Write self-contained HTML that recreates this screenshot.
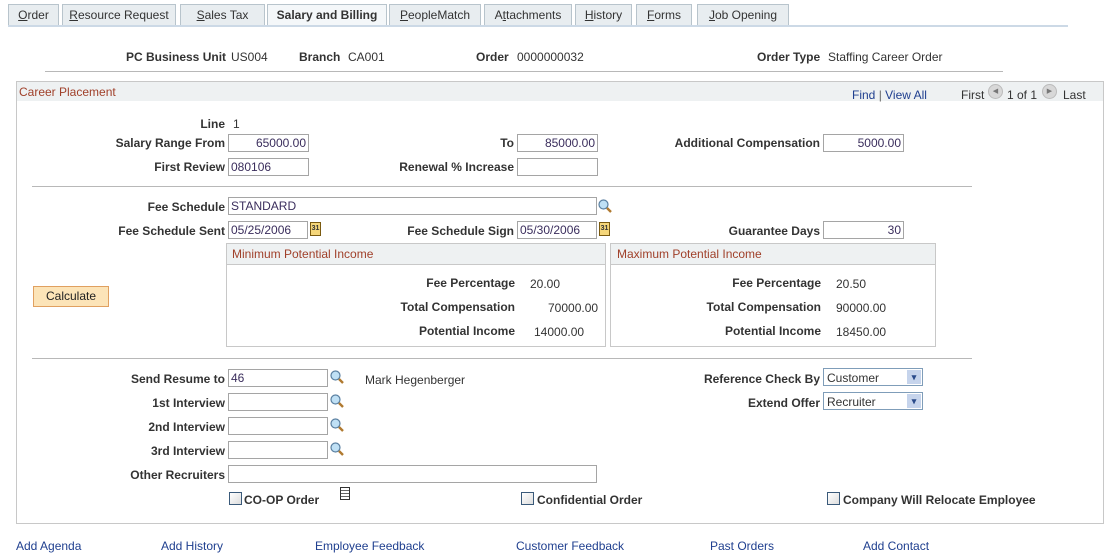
<!DOCTYPE html>
<html><head><meta charset="utf-8"><style>
body{margin:0;width:1104px;height:558px;background:#fff;font-family:"Liberation Sans",Arial,sans-serif;font-size:12px;color:#333;position:relative;overflow:hidden}
.a{position:absolute;white-space:nowrap}
.l{position:absolute;white-space:nowrap;font-weight:bold;color:#333;text-align:right}
.tab{position:absolute;top:4px;height:20px;border:1px solid #b8c4cc;border-bottom:none;background:#e8edf0;line-height:20px;text-align:center;color:#333;font-size:12px}
.tab u{text-decoration:underline}
.in{position:absolute;height:16px;border:1px solid #a5a5a5;background:#fff;line-height:16px;padding:0 2px;color:#3a2d5c;box-sizing:content-box}
.r{text-align:right}
.hl{position:absolute;height:1px;background:#b8b8b8}
.mag{position:absolute;width:14px;height:14px}
.cal{position:absolute;width:9px;height:12px;background:#f5d67a;border:1px solid #7a5a10;font-size:7px;line-height:12px;text-align:center;font-weight:bold;color:#333}
.cb{position:absolute;width:11px;height:11px;border:1px solid #3a5a7a;background:linear-gradient(135deg,#fff,#ddd)}
.lk{position:absolute;color:#1f3f8f;white-space:nowrap}
.sel{position:absolute;height:18px;border:1px solid #7f9db9;background:#fff;line-height:18px;padding-left:3px;box-sizing:border-box}
.sel b{position:absolute;right:1px;top:1px;width:14px;height:14px;background:#c6d4ec;color:#2a4a8a;font-size:9px;line-height:14px;text-align:center}
</style></head><body>
<svg width="0" height="0" style="position:absolute"><defs><g id="m"><circle cx="5.5" cy="5.5" r="4.5" fill="#bfe0f5" stroke="#5a7fa0" stroke-width="1.2"/><line x1="9" y1="9" x2="13" y2="13" stroke="#b07a30" stroke-width="2.4"/></g></defs></svg>

<div class="tab" style="left:8px;width:49px"><u>O</u>rder</div>
<div class="tab" style="left:62px;width:112px"><u>R</u>esource Request</div>
<div class="tab" style="left:180px;width:83px"><u>S</u>ales Tax</div>
<div class="tab" style="left:267px;width:118px;background:#f4f7f9;font-weight:bold;height:21px">Salary and Billing</div>
<div class="tab" style="left:389px;width:90px"><u>P</u>eopleMatch</div>
<div class="tab" style="left:484px;width:86px">A<u>t</u>tachments</div>
<div class="tab" style="left:575px;width:55px"><u>H</u>istory</div>
<div class="tab" style="left:636px;width:54px"><u>F</u>orms</div>
<div class="tab" style="left:697px;width:90px"><u>J</u>ob Opening</div>
<div class="hl" style="left:8px;top:25px;width:1060px;background:#ccd9e6;height:2px"></div>

<div class="l" style="left:126px;top:50px">PC Business Unit</div><div class="a" style="left:231px;top:50px">US004</div>
<div class="l" style="left:299px;top:50px">Branch</div><div class="a" style="left:348px;top:50px">CA001</div>
<div class="l" style="left:476px;top:50px">Order</div><div class="a" style="left:517px;top:50px">0000000032</div>
<div class="l" style="left:757px;top:50px">Order Type</div><div class="a" style="left:828px;top:50px">Staffing Career Order</div>
<div class="hl" style="left:45px;top:71px;width:958px"></div>

<div class="a" style="left:16px;top:81px;width:1086px;height:441px;border:1px solid #c8c8c8"></div>
<div class="a" style="left:17px;top:82px;width:1086px;height:19px;background:#eef1f2"></div>
<div class="a" style="left:19px;top:85px;color:#a0402a">Career Placement</div>
<div class="a" style="left:852px;top:88px;color:#1f3f8f">Find <span style="color:#666">|</span> View All</div>
<div class="a" style="left:961px;top:88px;color:#333">First</div>
<div class="a" style="left:988px;top:84px;width:13px;height:13px;border-radius:50%;background:#d8d8d8;border:1px solid #bbb;font-size:7px;line-height:13px;text-align:center;color:#777">◀</div>
<div class="a" style="left:1007px;top:88px">1 of 1</div>
<div class="a" style="left:1042px;top:84px;width:13px;height:13px;border-radius:50%;background:#d8d8d8;border:1px solid #bbb;font-size:7px;line-height:13px;text-align:center;color:#777">▶</div>
<div class="a" style="left:1063px;top:88px">Last</div>

<div class="l" style="right:879px;top:117px">Line</div><div class="a" style="left:233px;top:117px">1</div>
<div class="l" style="right:879px;top:136px">Salary Range From</div><div class="in r" style="left:228px;top:134px;width:75px">65000.00</div>
<div class="l" style="right:590px;top:136px">To</div><div class="in r" style="left:517px;top:134px;width:75px">85000.00</div>
<div class="l" style="right:284px;top:136px">Additional Compensation</div><div class="in r" style="left:823px;top:134px;width:75px">5000.00</div>
<div class="l" style="right:879px;top:160px">First Review</div><div class="in" style="left:228px;top:158px;width:75px">080106</div>
<div class="l" style="right:590px;top:160px">Renewal % Increase</div><div class="in" style="left:517px;top:158px;width:75px"></div>
<div class="hl" style="left:32px;top:186px;width:940px"></div>

<div class="l" style="right:879px;top:200px">Fee Schedule</div><div class="in" style="left:228px;top:197px;width:363px">STANDARD</div>
<svg class="mag" style="left:598px;top:199px"><use href="#m"/></svg>
<div class="l" style="right:879px;top:224px">Fee Schedule Sent</div><div class="in" style="left:228px;top:221px;width:74px">05/25/2006</div>
<div class="cal" style="left:310px;top:222px">31</div>
<div class="l" style="right:590px;top:224px">Fee Schedule Sign</div><div class="in" style="left:517px;top:221px;width:74px">05/30/2006</div>
<div class="cal" style="left:599px;top:222px">31</div>
<div class="l" style="right:284px;top:224px">Guarantee Days</div><div class="in r" style="left:823px;top:221px;width:75px">30</div>

<div class="a" style="left:226px;top:243px;width:378px;height:102px;border:1px solid #c8c8c8"></div>
<div class="a" style="left:227px;top:244px;width:378px;height:20px;background:#eef1f2;border-bottom:1px solid #c8c8c8"></div>
<div class="a" style="left:232px;top:247px;color:#a0402a">Minimum Potential Income</div>
<div class="l" style="right:589px;top:276px">Fee Percentage</div><div class="a" style="left:530px;top:277px">20.00</div>
<div class="l" style="right:589px;top:300px">Total Compensation</div><div class="a" style="left:548px;top:301px">70000.00</div>
<div class="l" style="right:589px;top:324px">Potential Income</div><div class="a" style="left:534px;top:325px">14000.00</div>

<div class="a" style="left:610px;top:243px;width:324px;height:102px;border:1px solid #c8c8c8"></div>
<div class="a" style="left:611px;top:244px;width:324px;height:20px;background:#eef1f2;border-bottom:1px solid #c8c8c8"></div>
<div class="a" style="left:617px;top:247px;color:#a0402a">Maximum Potential Income</div>
<div class="l" style="right:283px;top:276px">Fee Percentage</div><div class="a" style="left:836px;top:277px">20.50</div>
<div class="l" style="right:283px;top:300px">Total Compensation</div><div class="a" style="left:836px;top:301px">90000.00</div>
<div class="l" style="right:283px;top:324px">Potential Income</div><div class="a" style="left:836px;top:325px">18450.00</div>

<div class="a" style="left:33px;top:286px;width:74px;height:19px;background:#fce4b8;border:1px solid #e0a060;text-align:center;line-height:19px;color:#222">Calculate</div>
<div class="hl" style="left:32px;top:358px;width:940px"></div>

<div class="l" style="right:879px;top:372px">Send Resume to</div><div class="in" style="left:228px;top:369px;width:94px">46</div>
<svg class="mag" style="left:330px;top:370px"><use href="#m"/></svg>
<div class="a" style="left:365px;top:373px">Mark Hegenberger</div>
<div class="l" style="right:879px;top:396px">1st Interview</div><div class="in" style="left:228px;top:393px;width:94px"></div>
<svg class="mag" style="left:330px;top:394px"><use href="#m"/></svg>
<div class="l" style="right:879px;top:420px">2nd Interview</div><div class="in" style="left:228px;top:417px;width:94px"></div>
<svg class="mag" style="left:330px;top:418px"><use href="#m"/></svg>
<div class="l" style="right:879px;top:444px">3rd Interview</div><div class="in" style="left:228px;top:441px;width:94px"></div>
<svg class="mag" style="left:330px;top:442px"><use href="#m"/></svg>
<div class="l" style="right:879px;top:468px">Other Recruiters</div><div class="in" style="left:228px;top:465px;width:363px"></div>

<div class="l" style="right:284px;top:372px">Reference Check By</div><div class="sel" style="left:823px;top:368px;width:100px">Customer<b>▾</b></div>
<div class="l" style="right:284px;top:396px">Extend Offer</div><div class="sel" style="left:823px;top:392px;width:100px">Recruiter<b>▾</b></div>

<div class="cb" style="left:229px;top:492px"></div><div class="l" style="left:244px;top:493px">CO-OP Order</div>
<div class="a" style="left:340px;top:487px;width:8px;height:11px;border:1px solid #333;background:repeating-linear-gradient(#fff 0 2px,#666 2px 3px)"></div>
<div class="cb" style="left:521px;top:492px"></div><div class="l" style="left:537px;top:493px">Confidential Order</div>
<div class="cb" style="left:827px;top:492px"></div><div class="l" style="left:843px;top:493px">Company Will Relocate Employee</div>

<div class="lk" style="left:16px;top:539px">Add Agenda</div>
<div class="lk" style="left:161px;top:539px">Add History</div>
<div class="lk" style="left:315px;top:539px">Employee Feedback</div>
<div class="lk" style="left:516px;top:539px">Customer Feedback</div>
<div class="lk" style="left:710px;top:539px">Past Orders</div>
<div class="lk" style="left:863px;top:539px">Add Contact</div>
</body></html>
